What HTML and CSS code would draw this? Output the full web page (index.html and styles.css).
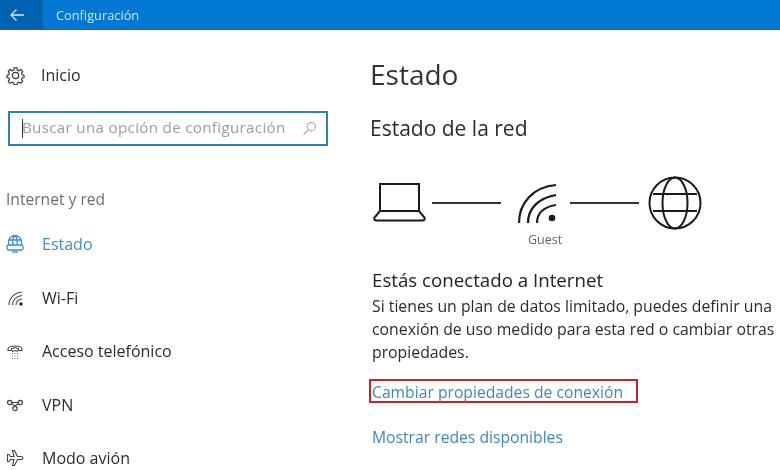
FILE: index.html
```html
<!DOCTYPE html>
<html lang="es">
<head>
<meta charset="utf-8">
<title>Configuración</title>
<link rel="stylesheet" href="styles.css">
</head>
<body>
<header class="titlebar">
  <div class="back"><svg width="16" height="14" viewBox="0 0 16 14"><path d="M15 7H2M7.500 1.500 2 7l5.500 5.500" fill="none" stroke="#cfe6f8" stroke-width="1.300"/></svg></div>
  <div class="apptitle">Configuración</div>
</header>
<div class="layout">
  <aside class="sidebar">
    <div class="home">
      <svg class="ico" width="19" height="19" viewBox="0 0 18 18"><g fill="none" stroke="#333" stroke-width="1.200"><circle cx="9" cy="9" r="3"/><path d="M7.500 1h3l.5 2.300 1.600.7 2-1.300 2 2.100-1.200 2 .6 1.500 2 .6v2.200l-2 .6-.6 1.600 1.200 2-2 2-2-1.200-1.600.6-.5 2h-3l-.5-2-1.600-.6-2 1.200-2-2 1.200-2-.6-1.600-2-.6V8.900l2-.6.6-1.500-1.200-2 2-2.100 2 1.300L7 3.300z" transform="translate(.9 .9) scale(.9)"/></g></svg>
      <span>Inicio</span>
    </div>
    <div class="search">
      <span class="caret"></span>
      <span class="placeholder">Buscar una opción de configuración</span>
      <svg width="15" height="15" viewBox="0 0 15 15"><g fill="none" stroke="#a8a8a8" stroke-width="1.100"><circle cx="9.300" cy="5.700" r="4.200"/><path d="M6.300 8.700 1.500 13.500"/></g></svg>
    </div>
    <div class="section">Internet y red</div>
    <nav class="nav">
      <div class="item active">
        <svg class="ico" width="18" height="18" viewBox="0 0 18 18"><g fill="none" stroke="#2f8fd0" stroke-width="1.300"><path d="M2.500 10V7a6.500 6.500 0 0 1 13 0v3"/><path d="M9 .5C6.500 3 6.500 7 7 10M9 .5c2.500 2.500 2.500 6.500 2 9.500M2.500 5h13"/><rect x="1" y="10" width="16" height="5" rx="1.500"/><path d="M6 17h6"/></g></svg>
        <span>Estado</span>
      </div>
      <div class="item">
        <svg class="ico" width="18" height="18" viewBox="0 0 18 18"><g fill="none" stroke="#444" stroke-width="1.100"><path d="M3 16C3 10 8 3.500 16 3"/><path d="M6.500 16c0-4.500 3.500-9 9.500-9.500"/><path d="M10 16c0-3 2-5.500 6-6"/></g><circle cx="15" cy="15" r="1.700" fill="#222"/></svg>
        <span>Wi-Fi</span>
      </div>
      <div class="item">
        <svg class="ico" width="18" height="18" viewBox="0 0 18 18"><path d="M2 8.500V7c0-4 14-4 14 0v1.500h-3.500V6.500c-2-.8-5-.8-7 0v2zM6 9.500c1-1 5-1 6 0" fill="none" stroke="#444" stroke-width="1.100"/><path d="M6 11.500h1M8.500 11.500h1M11 11.500h1M6 14h1M8.500 14h1M11 14h1M6 16.500h1M8.500 16.500h1M11 16.500h1" stroke="#777" stroke-width="1.100"/></svg>
        <span>Acceso telefónico</span>
      </div>
      <div class="item">
        <svg class="ico" width="18" height="18" viewBox="0 0 18 18"><g fill="none" stroke="#444" stroke-width="1.200"><circle cx="3.700" cy="6.500" r="2.200"/><circle cx="14.300" cy="6.500" r="2.200"/><circle cx="9" cy="12.500" r="2.200"/><path d="M5.500 7.800c1.500 1 2.500 1 3.500 2.500M12.500 7.800c-1.500 1-2.500 1-3.500 2.500M6 6.500h6"/></g></svg>
        <span>VPN</span>
      </div>
      <div class="item">
        <svg class="ico" width="18" height="18" viewBox="0 0 18 18"><path d="M17 9c0-1-1-1.500-2-1.500h-3.500L8.500 1.500H6.500L8 7.500H4.500L3 5.500H1.500V12.500H3l1.500-2H8L6.500 16.500h2l3-6H15c1 0 2-.5 2-1.500z" fill="none" stroke="#444" stroke-width="1.100"/></svg>
        <span>Modo avión</span>
      </div>
    </nav>
  </aside>
  <main class="main">
    <h1>Estado</h1>
    <h2>Estado de la red</h2>
    <div class="diagram">
      <svg class="laptop" width="54" height="40" viewBox="0 0 54 40"><g fill="none" stroke="#1a1a1a" stroke-width="2"><path d="M7 29V2h39v27"/><path d="M7 29 1.500 35.500C.7 37.500 2 38.500 3.500 38.500h46c1.500 0 2.800-1 2-3L46 29z"/></g></svg>
      <span class="line first"></span>
      <div class="network">
        <svg width="40" height="42" viewBox="0 0 40 42"><g fill="none" stroke="#1a1a1a" stroke-width="2.200"><path d="M2 40C2 20 16 4 39 2"/><path d="M11 40c0-14 10-25 28-28"/><path d="M20 40c0-9 6-16 19-18"/></g><circle cx="35" cy="35" r="3.300" fill="#1a1a1a"/></svg>
        <span class="guest">Guest</span>
      </div>
      <span class="line second"></span>
      <svg width="54" height="54" viewBox="0 0 54 54"><g fill="none" stroke="#1a1a1a" stroke-width="2"><circle cx="27" cy="27" r="25.500"/><ellipse cx="27" cy="27" rx="12.500" ry="25.500"/><path d="M5 18h44M5 35h44"/></g></svg>
    </div>
    <h3>Estás conectado a Internet</h3>
    <p>Si tienes un plan de datos limitado, puedes definir una<br>conexión de uso medido para esta red o cambiar otras<br>propiedades.</p>
    <a class="link boxed" href="#">Cambiar propiedades de conexión</a>
    <a class="link" href="#">Mostrar redes disponibles</a>
  </main>
</div>
</body>
</html>
```
FILE: styles.css
```css
* { box-sizing: border-box; }
html, body { margin: 0; height: 470px; overflow: hidden; background: #fff; }
body { font-family: "Open Sans", "Noto Sans", sans-serif; color: #2b2b2b; filter: blur(.35px); }

.titlebar { display: flex; align-items: center; height: 30px; background: #0078d4; border-bottom: 1px solid #0a68b0; }
.back { display: flex; align-items: center; justify-content: center; width: 43px; height: 100%; padding-right: 10px; background: #0063b1; }
.apptitle { margin-left: 13px; font-size: 12.800px; color: #cfe6f8; }

.layout { display: flex; }
.sidebar { width: 370px; flex: none; padding: 33px 0 0 6px; }
.ico { flex: none; }

.home { display: flex; align-items: center; gap: 16px; height: 24px; font-size: 16px; }
.search { display: flex; align-items: center; width: 320px; height: 35px; margin: 24px 0 0 2px; padding: 0 9px 0 12px; border: 2px solid #2f7fb5; }
.caret { width: 1px; height: 19px; background: #333; flex: none; }
.placeholder { flex: 1; font-size: 15.200px; letter-spacing: .3px; line-height: 20px; padding-bottom: 3px; color: #9d9d9d; white-space: nowrap; margin-left: -1px; }
.section { margin-top: 43px; font-size: 15.600px; line-height: 20px; color: #6f6f6f; }

.nav { display: flex; flex-direction: column; gap: 29.500px; margin-top: 23px; }
.item { display: flex; align-items: center; gap: 18px; height: 24px; font-size: 16px; white-space: nowrap; }
.item.active { color: #3f8fc4; }

.main { flex: 1; padding-top: 24px; }
h1 { margin: 0; font-size: 28px; font-weight: 400; line-height: 40px; color: #333; }
h2 { margin: 20px 0 0; font-size: 21px; font-weight: 400; line-height: 28px; color: #2b2b2b; }
.diagram { display: flex; align-items: center; height: 54px; margin: 34px 0 0 3px; }
.laptop { margin-bottom: 2px; }
.line { height: 2px; background: #333; }
.line.first { width: 69px; margin: 0 16px 0 5px; }
.line.second { width: 69px; margin: 0 9px 0 13px; }
.network { position: relative; width: 40px; height: 42px; margin-top: 2px; }
.guest { position: absolute; left: 11px; top: 49px; font-size: 12.500px; line-height: 16px; color: #666; }
h3 { margin: 38px 0 0 2px; font-size: 18.700px; font-weight: 400; line-height: 24px; color: #222; }
p { margin: 3px 0 0 2px; font-size: 15.800px; line-height: 23px; color: #2b2b2b; white-space: nowrap; }
.link { display: block; font-size: 15.700px; line-height: 20px; color: #3f86bd; text-decoration: none; white-space: nowrap; }
.boxed { width: 269px; height: 24px; margin: 15px 0 0 -1px; padding-left: 1px; border: 2.500px solid #cf1f2e; line-height: 22px; }
.boxed + .link { margin: 24px 0 0 2px; }
```
